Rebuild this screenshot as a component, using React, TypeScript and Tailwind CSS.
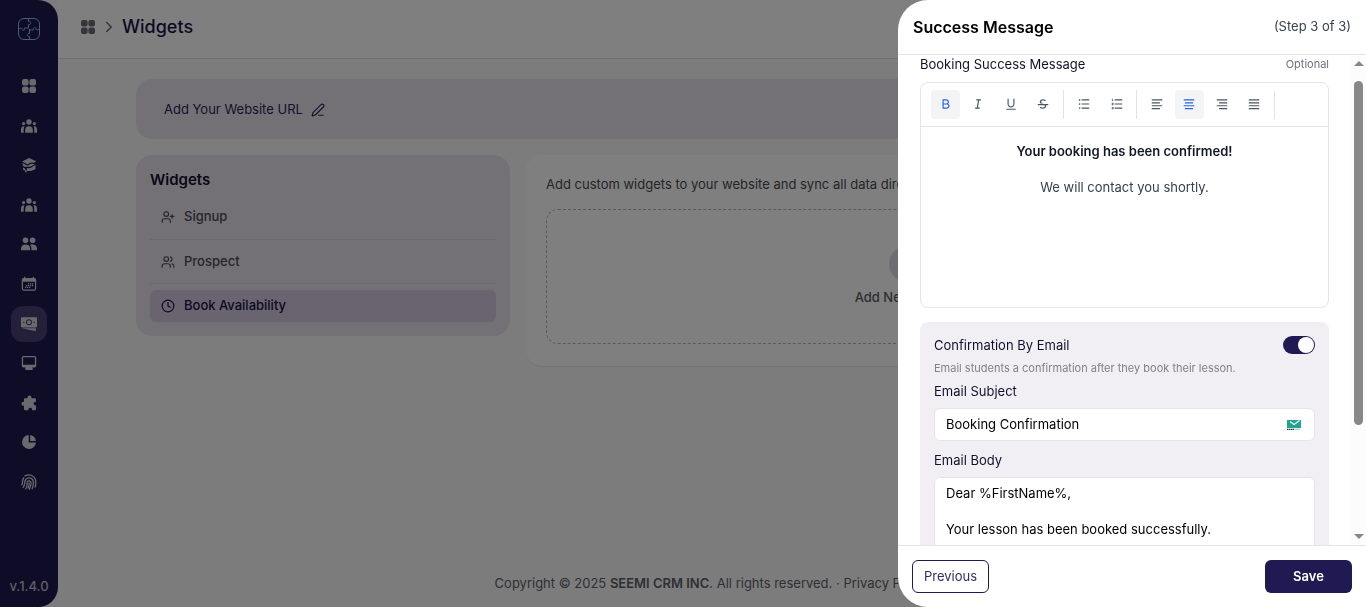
import React from "react";
import {
  RiBold,
  RiItalic,
  RiUnderline,
  RiStrikethrough,
  RiListUnordered,
  RiListOrdered,
  RiAlignLeft,
  RiAlignCenter,
  RiAlignRight,
  RiAlignJustify,
} from "react-icons/ri";
import { ChevronRight, PenLine, UserPlus, Users, Clock, Plus } from "lucide-react";

const Logo = () => (
  <svg width="24" height="24" viewBox="0 0 24 24" fill="none" stroke="#7cc4dc" strokeWidth="1">
    <rect x="1.500" y="1.500" width="21" height="21" rx="5.500" />
    <path d="M11.500 1.500v3c2.600-.8 3 3.600 0 3.200v3.500" />
    <path d="M1.500 12.500c2-2.400 3.600-1.600 3.600.2 1.400 1.600 3-.4 2.400-1.700h4" />
    <path d="M12.500 22.500v-3c-2.600.8-3-3.600 0-3.200V12" />
    <path d="M22.500 11.500c-2 2.400-3.600 1.600-3.600-.2-1.400-1.600-3 .4-2.400 1.700h-4" />
  </svg>
);

interface GlyphProps {
  children: React.ReactNode;
}

const Glyph: React.FC<GlyphProps> = ({ children }) => (
  <svg width="16" height="16" viewBox="0 0 16 16" fill="currentColor">
    {children}
  </svg>
);

const GridIcon = () => (
  <Glyph>
    <rect x="1" y="1" width="6.600" height="6.600" rx="2" />
    <rect x="8.400" y="1" width="6.600" height="6.600" rx="2" />
    <rect x="1" y="8.400" width="6.600" height="6.600" rx="2" />
    <rect x="8.400" y="8.400" width="6.600" height="6.600" rx="2" />
  </Glyph>
);

const TeamIcon = () => (
  <Glyph>
    <circle cx="8" cy="4" r="2.700" />
    <circle cx="2.600" cy="5.600" r="1.600" />
    <circle cx="13.400" cy="5.600" r="1.600" />
    <path d="M4.200 14.700V12a3.800 3.800 0 0 1 7.600 0v2.700z" />
    <path d="M3.600 8.400C2.700 9.400 2.700 10.500 2.700 14.700H0v-3.600c0-1.800 1.500-3 3.600-2.700zM12.400 8.400c.9 1 .9 2.100.9 6.300H16v-3.600c0-1.800-1.500-3-3.600-2.700z" />
  </Glyph>
);

const CapIcon = () => (
  <Glyph>
    <path d="M8 1 15.200 4.200 13 5.800C10.500 5 8.300 5.500 6.800 7.500L1 4.600z" />
    <path d="M1.500 6 5.600 8.200C7.500 9.300 8.600 6.800 11 6.800l2.600.5-4.300 2.500H3.500C2 9.200 1.500 8 1.500 6z" />
    <path d="M6 11.200 9.500 11l5-3.200v4.400L9.700 14H6zM2 10.600l2 .8v2.300L2 12.600zM4.200 12.500h1.400v3.300l-1.400-.8z" />
  </Glyph>
);

const PeopleIcon = () => (
  <Glyph>
    <circle cx="4.500" cy="4.300" r="2.800" />
    <circle cx="11.600" cy="4.300" r="2.800" />
    <path d="M0 14.200v-1.500C0 10.200 1.900 8.600 4.700 8.600s4.500 1.600 4.500 4.100v1.500z" />
    <path d="M10.400 14.200v-1.700c0-1.500-.5-2.600-1.500-3.500.8-.3 1.600-.4 2.500-.4 2.800 0 4.600 1.600 4.600 4.100v1.500z" />
  </Glyph>
);

const CalendarIcon = () => (
  <Glyph>
    <path
      fillRule="evenodd"
      d="M3 .8h1.300V2h7.400V.8H13V2a2 2 0 0 1 2.200 2v8.700a2 2 0 0 1-2 2H2.800a2 2 0 0 1-2-2V4A2 2 0 0 1 3 2zM2 5.700v7c0 .6.300.9.900.9h10.200c.6 0 .9-.3.900-.9v-7z"
    />
    <path d="M7 7.200h1.200v1.200H7zM9 7.200h1.200v1.200H9zM11 7.200h1.200v1.200H11zM5 9h1.200v1.200H5zM7 9h1.200v1.200H7zM9 9h1.200v1.200H9zM11 9h1.200v1.200H11zM4 10.800h1.200V12H4zM6 10.800h1.200V12H6zM8 10.800h1.200V12H8z" />
  </Glyph>
);

const CashIcon = () => (
  <Glyph>
    <path
      fillRule="evenodd"
      d="M1.200 1.200h13.600c.7 0 1.200.5 1.200 1.200v7.800c0 .7-.5 1.200-1.200 1.200H1.200c-.7 0-1.200-.5-1.200-1.200V2.400c0-.7.500-1.200 1.200-1.200zM8 3.300a3 3 0 1 0 0 6 3 3 0 0 0 0-6zm0 1a2 2 0 1 1 0 4 2 2 0 0 1 0-4zM2 5.800v1h1.500v-1zm10.500 0v1H14v-1z"
    />
    <path d="M1 12.300h13.800v2.600L9 14.100z" />
  </Glyph>
);

const MonitorIcon = () => (
  <Glyph>
    <path
      fillRule="evenodd"
      d="M2.500 1h11A1.700 1.700 0 0 1 15.200 2.700v8.100a1.700 1.700 0 0 1-1.700 1.700h-2.300l.6 1.500v1H4.200v-1l.6-1.500H2.500A1.700 1.700 0 0 1 .8 10.800V2.700A1.700 1.700 0 0 1 2.500 1zm-.4 1.700v7h11.800v-7c0-.3-.1-.4-.4-.4h-11c-.3 0-.4.100-.4.400z"
    />
  </Glyph>
);

const PuzzleIcon = () => (
  <Glyph>
    <path d="M3.500 3.200h3V2.500a2 2 0 0 1 4 0v.7h3.200c.7 0 1.300.600 1.300 1.300v2.300h-.6a1.800 1.800 0 0 0 0 3.600h.6V14c0 .700-.6 1.300-1.300 1.300h-2.500v-.7a1.900 1.900 0 0 0-3.800 0v.7H4.300c-.7 0-1.300-.6-1.300-1.300v-3.200h-.5a2 2 0 0 1 0-4H3V4c0-.4.100-.8.500-.8z" />
  </Glyph>
);

const PieIcon = () => (
  <Glyph>
    <path d="M7.700 1v7.600H15A7 7 0 1 1 7.700 1z" />
    <path d="M9.200 1A7 7 0 0 1 14.900 7H9.200z" />
  </Glyph>
);

const FingerprintIcon = () => (
  <svg width="16" height="16" viewBox="0 0 16 16" fill="none" stroke="currentColor" strokeWidth="1.300" strokeLinecap="round">
    <path d="M4 1.900C8.500-.6 14.800 2 14.800 8c0 2.200-.2 3.800-.7 5.200" />
    <path d="M.9 11C2 8.500.9 6.300 2.700 4" />
    <path d="M2.200 13.300C4.600 10.500 2.900 8 4.700 5.500c2.500-3.200 7.700-1.300 7.700 2.800 0 2.500-.4 4.500-1.300 6.500" />
    <path d="M4.700 14.800C7 12 5.500 9.500 6.200 8c.9-1.800 3.800-1.300 3.800 1 0 2.300-.6 4.300-1.700 6.200" />
    <path d="M8.100 9c.1 2-.2 3.500-1 5" />
  </svg>
);

const navItems = [
  { label: "Dashboard", icon: <GridIcon /> },
  { label: "Students", icon: <TeamIcon /> },
  { label: "Lessons", icon: <CapIcon /> },
  { label: "Teachers", icon: <TeamIcon /> },
  { label: "Prospects", icon: <PeopleIcon /> },
  { label: "Calendar", icon: <CalendarIcon /> },
  { label: "Payments", icon: <CashIcon />, active: true },
  { label: "Website", icon: <MonitorIcon /> },
  { label: "Plugins", icon: <PuzzleIcon /> },
  { label: "Reports", icon: <PieIcon /> },
  { label: "Security", icon: <FingerprintIcon /> },
];

const Sidebar: React.FC = () => (
  <aside className="flex w-[58px] shrink-0 flex-col items-center rounded-r-[20px] bg-[#1f1850] text-[#d4d2dc]">
    <a href="#" aria-label="Home" className="mt-[17px]">
      <Logo />
    </a>
    <nav className="mt-[27px] flex h-[432px] flex-col justify-between">
      {navItems.map((item) => (
        <a
          key={item.label}
          href="#"
          aria-label={item.label}
          className={`flex h-9 w-9 items-center justify-center rounded-xl ${
            item.active ? "bg-[#4a4073]" : ""
          }`}
        >
          {item.icon}
        </a>
      ))}
    </nav>
    <span className="mt-auto mb-3 text-[13px] leading-[18px] font-medium text-[#c0bfc8]">v.1.4.0</span>
  </aside>
);

const Page: React.FC = () => (
  <div className="flex min-w-0 flex-1 flex-col bg-[#f8f8fb]">
    <header className="flex h-[59px] items-center border-b border-[#e2e2e6] bg-white pb-1 pl-[22px] text-[#6b6b74]">
      <GridIcon />
      <ChevronRight size={18} className="mx-1" />
      <h1 className="text-lg font-medium text-[#1a1446]">Widgets</h1>
    </header>

    <main className="flex flex-1 flex-col gap-4 px-[78px] pt-5">
      <div className="flex h-[60px] shrink-0 items-center gap-2 rounded-2xl bg-[#e8e3ec] px-7 pt-[2px] text-[#2b2358]">
        <span className="text-[13px]">Add Your Website URL</span>
        <button aria-label="Edit website URL">
          <PenLine size={14} />
        </button>
      </div>

      <div className="flex items-start gap-4">
        <section className="w-[374px] shrink-0 rounded-2xl bg-[#e8e3ec] p-[14px]">
          <h2 className="text-[15px] leading-[22px] font-semibold text-[#14102e]">Widgets</h2>
          <ul className="mt-1 text-[13px] font-medium text-[#4b4b57]">
            <li className="border-b border-[#d5d0da]">
              <button className="flex h-11 w-full items-center gap-[9px] px-[11px]">
                <UserPlus size={14} />
                Signup
              </button>
            </li>
            <li className="border-b border-[#d5d0da]">
              <button className="flex h-[43px] w-full items-center gap-[9px] px-[11px]">
                <Users size={14} />
                Prospect
              </button>
            </li>
            <li className="pt-[6px]">
              <button className="flex h-8 w-full items-center gap-[9px] rounded-md bg-[#d2c8df] px-[11px] text-[#1a1446]">
                <Clock size={14} />
                Book Availability
              </button>
            </li>
          </ul>
        </section>

        <section className="min-w-0 flex-1 rounded-2xl border-b border-[#e6e6ea] bg-white px-5 pt-[19px] pb-[22px]">
          <p className="truncate text-[13px] leading-[20px] text-[#4a4a50]">
            Add custom widgets to your website and sync all data directly to the platform.
          </p>
          <div className="mt-[15px] flex h-[135px] flex-col items-center justify-center gap-[6px] rounded-xl border border-dashed border-[#b4b4b8]">
            <span className="flex h-9 w-9 items-center justify-center rounded-full bg-[#dcdae6]">
              <Plus size={16} />
            </span>
            <button className="text-[13px] font-medium text-[#5b5b63]">Add New Widget</button>
          </div>
        </section>
      </div>
    </main>

    <footer className="pb-[15px] text-center text-[13px] leading-[18px] text-[#5f5f68]">
      Copyright © 2025 <strong className="font-semibold">SEEMI CRM INC</strong>. All rights reserved. ·{" "}
      <a href="#">Privacy Policy</a>
    </footer>
  </div>
);

interface ToolButtonProps {
  label: string;
  active?: boolean;
  children: React.ReactNode;
}

const ToolButton: React.FC<ToolButtonProps> = ({ label, active, children }) => (
  <button
    aria-label={label}
    className={`flex h-[29px] w-[29px] items-center justify-center rounded text-sm ${
      active ? "bg-[#f3f4f6] text-[#2563eb]" : "text-[#4b5563]"
    }`}
  >
    {children}
  </button>
);

const Divider = () => <span className="h-[29px] w-px bg-[#e2e2e6]" />;

const Editor: React.FC = () => (
  <div className="mt-[9px] h-[226px] rounded-lg border border-[#e4e4e9]">
    <div className="flex h-11 items-center gap-[5px] border-b border-[#e4e4e9] pb-px pl-[10px]">
      <div className="flex w-[127px] justify-between">
        <ToolButton label="Bold" active>
          <RiBold />
        </ToolButton>
        <ToolButton label="Italic">
          <RiItalic />
        </ToolButton>
        <ToolButton label="Underline">
          <RiUnderline />
        </ToolButton>
        <ToolButton label="Strikethrough">
          <RiStrikethrough />
        </ToolButton>
      </div>
      <Divider />
      <div className="flex w-[62px] justify-between">
        <ToolButton label="Bullet list">
          <RiListUnordered />
        </ToolButton>
        <ToolButton label="Numbered list">
          <RiListOrdered />
        </ToolButton>
      </div>
      <Divider />
      <div className="flex w-[127px] justify-between">
        <ToolButton label="Align left">
          <RiAlignLeft />
        </ToolButton>
        <ToolButton label="Align center" active>
          <RiAlignCenter />
        </ToolButton>
        <ToolButton label="Align right">
          <RiAlignRight />
        </ToolButton>
        <ToolButton label="Justify">
          <RiAlignJustify />
        </ToolButton>
      </div>
      <Divider />
    </div>
    <div className="pt-[15px] text-center text-[13px] leading-[18px]">
      <p className="font-semibold text-[#111827]">Your booking has been confirmed!</p>
      <p className="mt-[18px] text-[#374151]">We will contact you shortly.</p>
    </div>
  </div>
);

const MailBadge = () => (
  <svg width="14" height="12" viewBox="0 0 14 12">
    <rect y="1" width="14" height="8" fill="#1fa58c" />
    <path d="M3 2.500l4 3L12.500 1.500" fill="none" stroke="#fff" strokeWidth="1.200" />
    <path d="M0 10.300h7" stroke="#28323c" strokeWidth="1.200" strokeDasharray="1.500 .5" />
    <path d="M7.500 10.300h5.500" stroke="#8fd8c9" strokeWidth="1.200" />
  </svg>
);

const emailBody = `Dear %FirstName%,

Your lesson has been booked successfully.`;

const SuccessDrawer: React.FC = () => (
  <div
    role="dialog"
    aria-labelledby="drawer-title"
    className="fixed inset-y-0 right-0 flex w-[468px] flex-col overflow-hidden rounded-l-[30px] bg-white"
  >
    <header className="flex h-[55px] shrink-0 items-center justify-between border-b border-[#e4e4e9] px-[15px] pb-px">
      <h2 id="drawer-title" className="text-base font-semibold text-black">
        Success Message
      </h2>
      <span className="text-[13px] text-[#374151]">(Step 3 of 3)</span>
    </header>

    <div className="flex min-h-0 flex-1">
      <div className="min-w-0 flex-1 overflow-hidden pr-[21px] pl-[22px]">
        <div className="flex items-center justify-between leading-[18px]">
          <span className="text-[13px] text-[#11122a]">Booking Success Message</span>
          <span className="text-[11px] text-[#6b7280]">Optional</span>
        </div>
        <Editor />

        <section className="mt-[14px] rounded-lg bg-[#f1eff4] px-[14px] pt-[14px] pb-[14px]">
          <div className="flex items-center justify-between">
            <label htmlFor="confirm-email" className="text-[13px] leading-[18px] text-[#11122a]">
              Confirmation By Email
            </label>
            <input
              id="confirm-email"
              type="checkbox"
              defaultChecked
              className="h-[18px] w-8 appearance-none rounded-full bg-gray-300 p-px before:block before:h-4 before:w-4 before:rounded-full before:bg-white checked:bg-[#211a52] checked:before:ml-auto"
            />
          </div>
          <p className="mt-[5px] text-[11px] leading-[18px] text-[#80808c]">
            Email students a confirmation after they book their lesson.
          </p>
          <label htmlFor="subject" className="mt-[5px] block text-[13px] leading-[18px] text-[#11122a]">
            Email Subject
          </label>
          <div className="mt-2 flex h-[33px] items-center rounded-md border border-[#e6e4ea] bg-white pr-[13px] pl-[11px]">
            <input
              id="subject"
              defaultValue="Booking Confirmation"
              className="min-w-0 flex-1 text-[13px] text-black outline-none"
            />
            <MailBadge />
          </div>
          <label htmlFor="body" className="mt-[10px] block text-[13px] leading-[18px] text-[#11122a]">
            Email Body
          </label>
          <textarea
            id="body"
            defaultValue={emailBody}
            className="mt-2 block h-[160px] w-full resize-none rounded-md border border-[#e6e4ea] bg-white px-[11px] py-[6px] text-[13px] leading-[18px] text-black outline-none"
          />
        </section>
      </div>

      <div className="flex w-4 shrink-0 flex-col items-center bg-[#fcfcfc] py-[6px] pl-px" aria-hidden="true">
        <svg width="10" height="5" viewBox="0 0 10 5" fill="#888">
          <path d="M0 5l5-5 5 5z" />
        </svg>
        <div className="mt-[15px] h-[344px] w-[9px] rounded-full bg-[#888]" />
        <svg width="10" height="5" viewBox="0 0 10 5" fill="#888" className="mt-auto">
          <path d="M0 0l5 5 5-5z" />
        </svg>
      </div>
    </div>

    <footer className="flex h-[62px] shrink-0 items-center justify-between border-t border-[#e4e4e9] px-[14px]">
      <button className="h-[33px] rounded-md border border-[#211a52] px-[11px] text-[13px] text-[#332c66]">
        Previous
      </button>
      <button className="h-[33px] w-[87px] rounded-md bg-[#211a52] text-[13px] font-semibold text-white">
        Save
      </button>
    </footer>
  </div>
);

export default function App() {
  return (
    <div className="flex min-h-screen bg-[#f8f8fb] font-['Inter',sans-serif]">
      <Sidebar />
      <Page />
      <div className="fixed inset-0 bg-black/50" />
      <SuccessDrawer />
    </div>
  );
}
